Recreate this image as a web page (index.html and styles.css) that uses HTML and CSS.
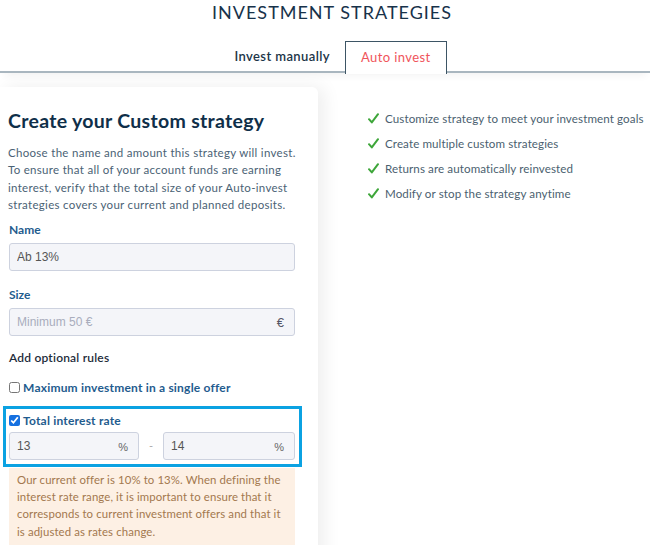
FILE: index.html
```html
<!DOCTYPE html>
<html>
<head>
<meta charset="utf-8">
<link rel="stylesheet" href="styles.css">
</head>
<body>
<header class="page-head">
  <h1 class="page-title">INVESTMENT STRATEGIES</h1>
  <nav class="tabs">
    <span class="tab">Invest manually</span>
    <span class="tab tab-active">Auto invest</span>
  </nav>
</header>
<main class="main">
  <section class="card">
    <h2 class="card-title">Create your Custom strategy</h2>
    <p class="intro">Choose the name and amount this strategy will invest. To ensure that all of your account funds are earning interest, verify that the total size of your Auto-invest strategies covers your current and planned deposits.</p>

    <label class="label">Name</label>
    <div class="field"><input class="field-input" type="text" value="Ab 13%"></div>

    <label class="label label-size">Size</label>
    <div class="field"><input class="field-input" type="text" placeholder="Minimum 50 €"><span class="suffix suffix-euro">€</span></div>

    <div class="rules-title">Add optional rules</div>

    <label class="check-row"><input class="check" type="checkbox"><span>Maximum investment in a single offer</span></label>

    <div class="highlight">
      <label class="check-row check-row-tight"><input class="check" type="checkbox" checked><span>Total interest rate</span></label>
      <div class="range">
        <div class="field field-small"><input class="field-input" type="text" value="13"><span class="suffix">%</span></div>
        <span class="dash">-</span>
        <div class="field field-small"><input class="field-input" type="text" value="14"><span class="suffix">%</span></div>
      </div>
    </div>

    <div class="info">Our current offer is 10% to 13%. When defining the interest rate range, it is important to ensure that it corresponds to current investment offers and that it is adjusted as rates change.</div>
  </section>

  <ul class="benefits">
    <li class="benefit"><svg class="tick" viewBox="0 0 11 11" width="11" height="11"><path d="M1 6.2 L3.8 9.4 L10 1.2" fill="none" stroke="#3ea63a" stroke-width="2" stroke-linecap="round" stroke-linejoin="round"/></svg>Customize strategy to meet your investment goals</li>
    <li class="benefit"><svg class="tick" viewBox="0 0 11 11" width="11" height="11"><path d="M1 6.2 L3.8 9.4 L10 1.2" fill="none" stroke="#3ea63a" stroke-width="2" stroke-linecap="round" stroke-linejoin="round"/></svg>Create multiple custom strategies</li>
    <li class="benefit"><svg class="tick" viewBox="0 0 11 11" width="11" height="11"><path d="M1 6.2 L3.8 9.4 L10 1.2" fill="none" stroke="#3ea63a" stroke-width="2" stroke-linecap="round" stroke-linejoin="round"/></svg>Returns are automatically reinvested</li>
    <li class="benefit"><svg class="tick" viewBox="0 0 11 11" width="11" height="11"><path d="M1 6.2 L3.8 9.4 L10 1.2" fill="none" stroke="#3ea63a" stroke-width="2" stroke-linecap="round" stroke-linejoin="round"/></svg>Modify or stop the strategy anytime</li>
  </ul>
</main>
</body>
</html>
```

FILE: styles.css
```css
* { box-sizing: border-box; }
html, body { margin: 0; padding: 0; background: #fff; }
body {
  font-family: Lato, "Open Sans", sans-serif;
  color: #1d3448;
  width: 650px;
  height: 545px;
  overflow: hidden;
}

.page-head { display: flex; flex-direction: column; align-items: center; }
.page-title {
  margin: 2px 0 0 14px;
  font-size: 18px;
  font-weight: 400;
  letter-spacing: 1px;
  color: #17324a;
  line-height: 20px;
}
.tabs {
  align-self: stretch;
  display: flex;
  justify-content: center;
  padding-left: 16px;
  margin-top: 19px;
  border-bottom: 2px solid #a9b6bf;
  height: 32px;
  box-shadow: 0 6px 8px -4px rgba(0,0,0,0.06);
}
.tab {
  padding: 7px 15px 0;
  font-size: 13px;
  font-weight: 600;
  color: #1c3548;
  letter-spacing: 0.4px;
}
.tab-active {
  color: #f0545b;
  font-weight: 400;
  background: #fff;
  border: 1px solid #3d5565;
  border-bottom: none;
  height: 33px;
  margin-bottom: -2px;
  margin-left: 0;
}

.main { display: flex; align-items: flex-start; margin-top: 14px; }
.card {
  width: 318px;
  flex: none;
  padding: 22px 23px 20px 9px;
  background: #fff;
  border-radius: 0 6px 0 0;
  box-shadow: 6px 0 18px rgba(0,0,0,0.07);
  min-height: 460px;
}
.card-title {
  margin: 0 0 0 -1px;
  font-size: 19.5px;
  font-weight: 700;
  color: #0f2f49;
  letter-spacing: 0.3px;
  line-height: 24px;
}
.intro {
  margin: 11px -12px 0 -1px;
  font-size: 11.5px;
  letter-spacing: 0.3px;
  line-height: 17.4px;
  color: #4a6275;
}
.label {
  display: block;
  margin-top: 8px;
  font-size: 12px;
  font-weight: 700;
  color: #1f5c8e;
  line-height: 16px;
}
.label-size { margin-top: 16px; }
.field {
  display: flex;
  align-items: center;
  margin-top: 5px;
  height: 28px;
  width: 286px;
  background: #f4f5f9;
  border: 1px solid #cdd2df;
  border-radius: 3px;
  padding: 0 10px 0 7px;
}
.field-input {
  flex: 1;
  min-width: 0;
  border: none;
  background: transparent;
  font-family: "Liberation Sans", Arial, sans-serif;
  font-size: 12px;
  color: #555;
  padding: 0;
  outline: none;
}
.field-input::placeholder { color: #a9adbd; }
.suffix {
  font-family: "Liberation Sans", Arial, sans-serif;
  font-size: 11px;
  color: #666;
  padding-top: 3px;
}
.suffix-euro { font-size: 13px; color: #556; padding-top: 1px; }

.rules-title {
  margin-top: 14px;
  font-size: 12px;
  font-weight: 600;
  color: #1d2c3a;
  line-height: 16px;
  letter-spacing: 0.2px;
}
.check-row {
  display: flex;
  align-items: center;
  gap: 3px;
  margin-top: 14px;
  font-size: 12px;
  font-weight: 700;
  color: #1f5c8e;
  letter-spacing: 0.2px;
  line-height: 16px;
}
.check {
  width: 11px;
  height: 11px;
  margin: 0;
  accent-color: #1570e0;
}
.highlight {
  margin: 10px -7px 0 -6px;
  border: 3px solid #0ba2e2;
  padding: 4px 4px 4px 3px;
}
.check-row-tight { margin-top: 0; }
.range { display: flex; align-items: center; margin-top: 3px; }
.field-small { width: 130px; margin-top: 0; }
.range .field-small:last-child { width: 132px; }
.dash {
  width: 24px;
  text-align: center;
  font-size: 11px;
  color: #aaa;
}
.info {
  margin-top: 1px;
  width: 286px;
  background: #fdf0e4;
  padding: 3px 8px 8px 8px;
  font-size: 11.4px;
  letter-spacing: 0.1px;
  line-height: 17.4px;
  color: #a3784e;
}

.benefits {
  list-style: none;
  margin: 19px 0 0 50px;
  padding: 0;
}
.benefit {
  display: flex;
  align-items: center;
  height: 25px;
  font-size: 11.6px;
  letter-spacing: 0.1px;
  color: #4b5f70;
  white-space: nowrap;
}
.tick {
  width: 11px;
  height: 11px;
  margin-right: 6px;
  flex: none;
}
```
